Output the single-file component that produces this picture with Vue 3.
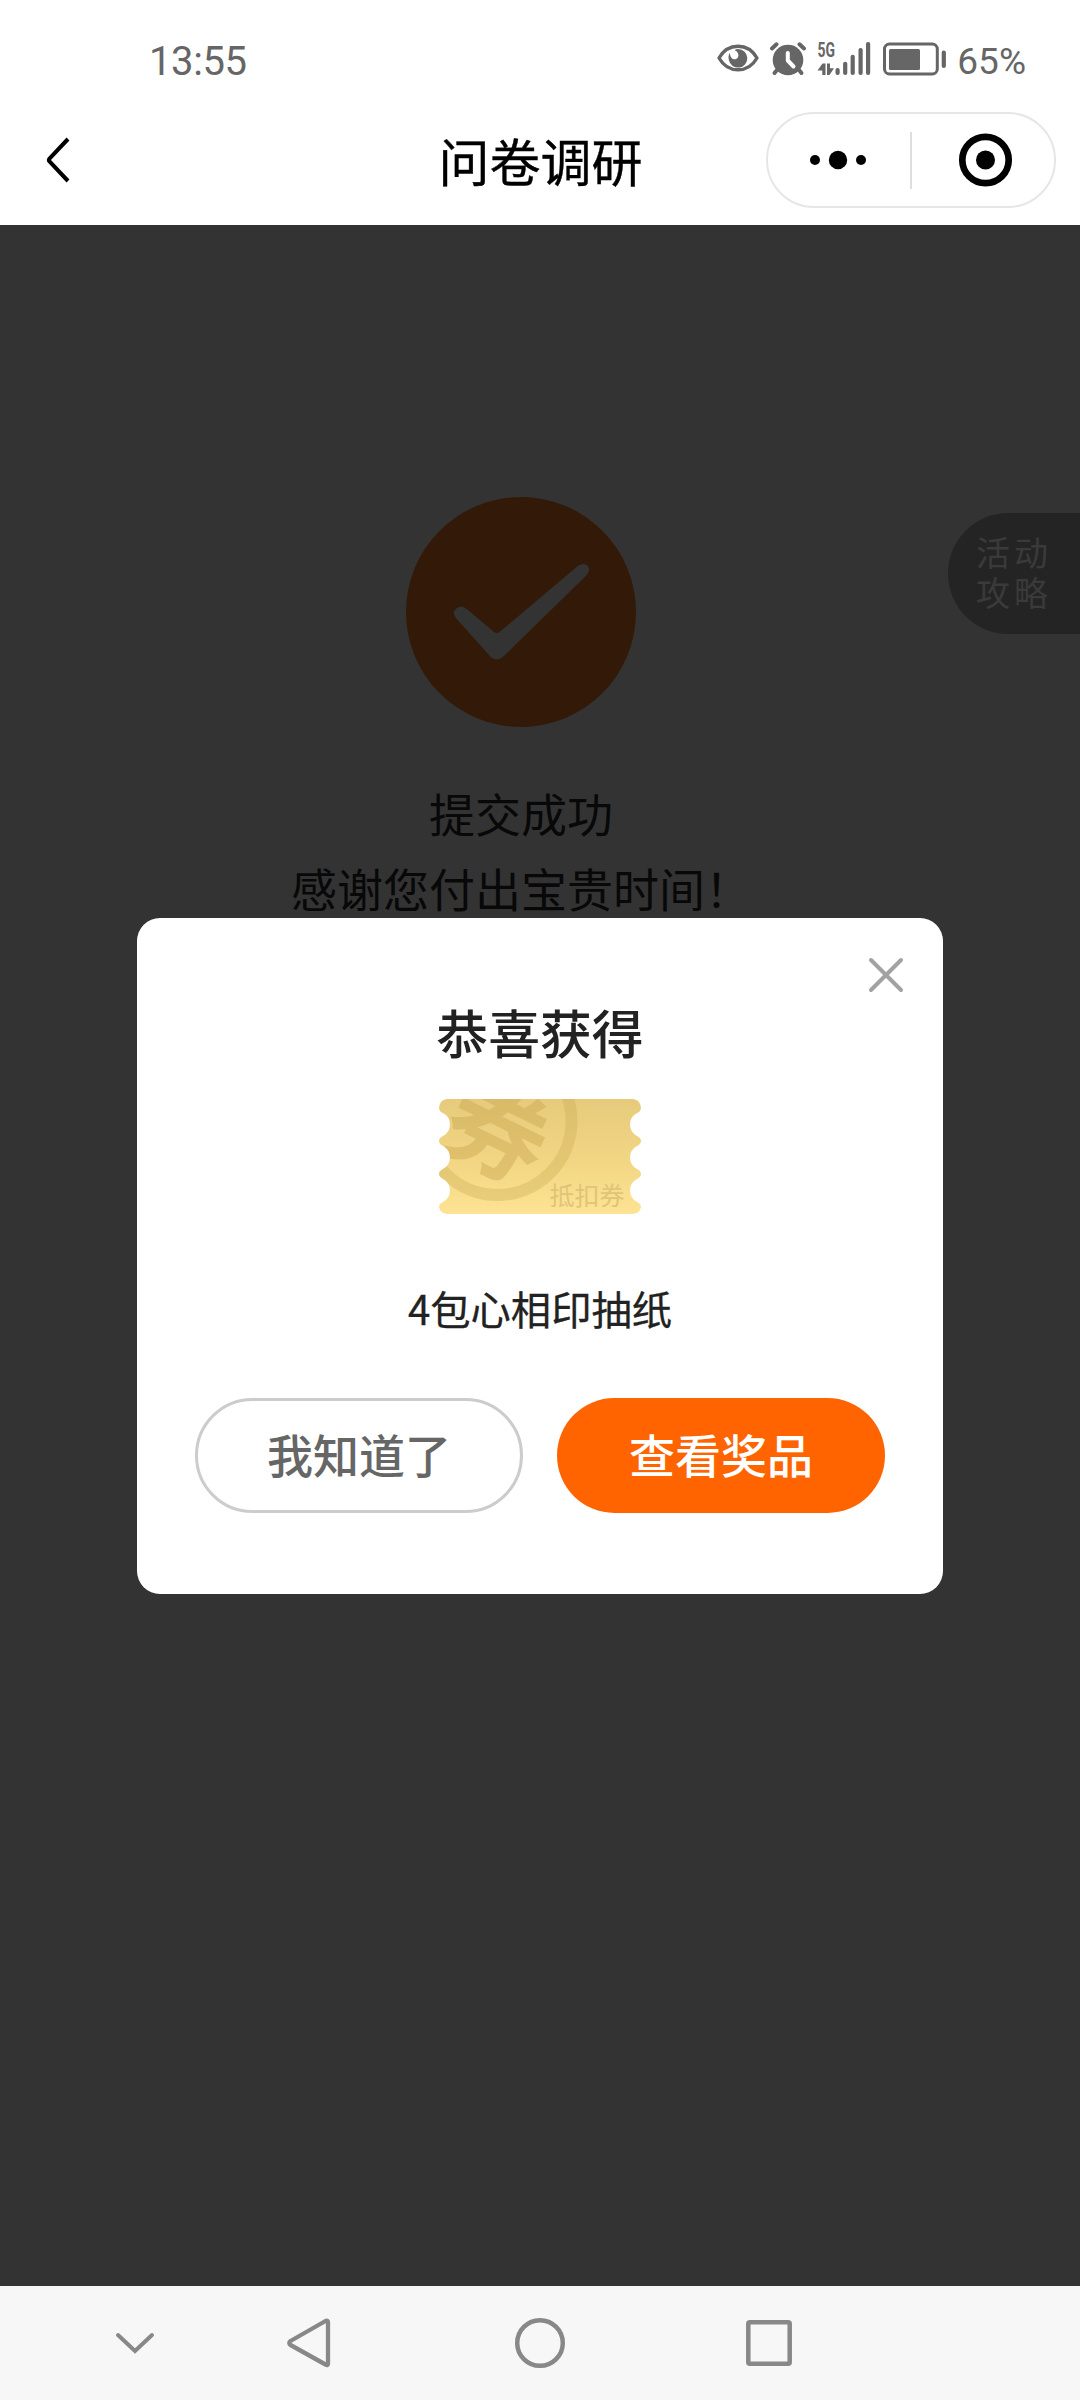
<script setup>
const signalBars = [
  { x: 0, h: 7 },
  { x: 7.6, h: 13.3 },
  { x: 15.1, h: 20.3 },
  { x: 23, h: 27 },
  { x: 30.5, h: 33 },
]
const thanks = ['提交成功', '感谢您付出宝贵时间！']
</script>

<template>
  <div class="screen">
    <header class="top">
      <div class="status">
        <span class="clock">13:55</span>
        <div class="indicators">
          <svg class="eye" width="42" height="28" viewBox="0 0 42 28">
            <path d="M2 14C6 7 13 2.2 21 2.2S36 7 40 14C36 21 29 25.8 21 25.8S6 21 2 14Z" fill="none" stroke="#666" stroke-width="3.4" stroke-linejoin="round" />
            <path d="M21 5a9.300 9.300 0 1 1-9.100 11.200c-.8-3.200-.4-5 .9-7.200c.5 4.500 2.700 6.500 5.200 6.300c3.600-.300 4.600-4.600 2-7.500c-.8-.9-1.500-1.300-2.500-1.600c1-.8 2.200-1.200 3.500-1.200Z" fill="#666" />
          </svg>
          <svg class="alarm" width="36" height="34" viewBox="0 0 36 34">
            <circle cx="18" cy="18" r="15.300" fill="#666" />
            <path d="M2 6.500L6.500 2.300M34 6.500L29.500 2.300" stroke="#666" stroke-width="4" stroke-linecap="round" />
            <path d="M7 28L4.500 31M29 28L31.500 31" stroke="#666" stroke-width="4" stroke-linecap="round" />
            <path d="M17.800 11V18.500L23.500 24.500" fill="none" stroke="#fff" stroke-width="4" stroke-linecap="round" stroke-linejoin="round" />
          </svg>
          <svg class="signal" width="53" height="34" viewBox="0 0 53 34">
            <text x="-0.500" y="15" font-size="20.500" font-weight="700" textLength="17.500" lengthAdjust="spacingAndGlyphs" fill="#666">5G</text>
            <path d="M-0.500 28.500L4.500 21.500H7.500V33H4.300V28.500Z" fill="#666" />
            <path d="M9 21.500H12V26.300H16L11.500 33H9Z" fill="#666" />
            <rect v-for="b in signalBars" :key="b.x" :x="17.500 + b.x" :y="33 - b.h" width="4.200" :height="b.h" rx="2" fill="#666" />
          </svg>
          <svg class="battery" width="64" height="34" viewBox="0 0 64 34">
            <rect x="1.500" y="2" width="52.800" height="30" rx="5" fill="none" stroke="#666" stroke-width="3" />
            <rect x="6" y="7" width="31" height="21" rx="1.500" fill="#666" />
            <rect x="58.700" y="8.500" width="4.200" height="17.500" rx="2" fill="#666" />
          </svg>
          <span class="percent">65%</span>
        </div>
      </div>
      <div class="titlebar">
        <svg class="back" width="32" height="52" viewBox="0 0 32 52">
          <path d="M26 5L7.500 24.500Q6.200 26 7.500 27.500L26 47" fill="none" stroke="#000" stroke-width="4" />
        </svg>
        <h1>问卷调研</h1>
        <div class="capsule">
          <svg width="142" height="56" viewBox="0 0 142 56">
            <circle cx="47" cy="28" r="5" />
            <circle cx="70" cy="28" r="9.200" />
            <circle cx="93" cy="28" r="5" />
          </svg>
          <i></i>
          <svg width="142" height="56" viewBox="0 0 142 56">
            <circle cx="73.500" cy="28" r="23.200" fill="none" stroke="#000" stroke-width="6.700" />
            <circle cx="73.500" cy="28" r="9.500" />
          </svg>
        </div>
      </div>
    </header>

    <main class="content">
      <div class="result">
        <svg class="tick" width="230" height="230" viewBox="0 0 230 230">
          <circle cx="115" cy="115" r="115" fill="#331a08" />
          <path d="M49 121Q45 115 49 112Q54 107 60 112L86 134Q90 138 94 134L171 69Q177 65 181 69Q184 73 180 78L96 160Q90 165 84 160Z" transform="translate(0.800 0)" fill="#333" />
        </svg>
        <p v-for="line in thanks" :key="line">{{ line }}</p>
      </div>

      <div class="guide"><span>活动</span><span>攻略</span></div>

      <section class="dialog">
        <svg class="close" width="36" height="36" viewBox="0 0 36 36">
          <path d="M3 3L33 33M33 3L3 33" stroke="#a2a2a2" stroke-width="4" stroke-linecap="round" />
        </svg>
        <h2>恭喜获得</h2>
        <svg class="coupon" width="202" height="115" viewBox="0 0 202 115">
          <defs>
            <linearGradient id="gold" x1="0" y1="0" x2="0" y2="1">
              <stop offset="0" stop-color="#e6cb7c" />
              <stop offset="0.550" stop-color="#f2d684" />
              <stop offset="1" stop-color="#fde393" />
            </linearGradient>
            <clipPath id="ticket">
              <path d="M8 0H194Q202 1 202 10Q201 13 198 14A13 13 0 0 0 198 37Q202 39 202 42Q202 45 198 47A13 13 0 0 0 198 70Q202 72 202 75Q202 78 198 80A13 13 0 0 0 198 103Q202 105 202 108Q201 114 194 115H8Q1 114 0 108Q0 105 4 103A13 13 0 0 0 4 80Q0 78 0 75Q0 72 4 70A13 13 0 0 0 4 47Q0 45 0 42Q0 39 4 37A13 13 0 0 0 4 14Q1 13 0 10Q0 1 8 0Z" />
            </clipPath>
          </defs>
          <g clip-path="url(#ticket)">
            <rect width="202" height="115" fill="url(#gold)" />
            <circle cx="58.500" cy="22" r="74" fill="none" stroke="#c9a750" stroke-opacity="0.330" stroke-width="12" />
            <text x="0" y="36" font-size="102" font-weight="700" text-anchor="middle" transform="translate(57.500 34) rotate(26)" fill="#c9a750" fill-opacity="0.450">券</text>
            <text x="110.500" y="105.500" font-size="25" fill="#dfc577">抵扣券</text>
          </g>
        </svg>
        <p class="prize">4包心相印抽纸</p>
        <div class="actions">
          <button class="ghost">我知道了</button>
          <button class="primary">查看奖品</button>
        </div>
      </section>
    </main>

    <nav class="navbar">
      <svg width="46" height="56" viewBox="0 0 46 56">
        <path d="M6 20L23 36L40 20" fill="none" stroke="#888" stroke-width="4" stroke-linecap="round" />
      </svg>
      <svg width="56" height="56" viewBox="0 0 56 56">
        <path d="M47 7.500V48.500Q47 51 44.500 49.500L9.500 30Q7 28 9.500 26L44.500 6Q47 5 47 7.500Z" fill="none" stroke="#888" stroke-width="4.300" stroke-linejoin="round" />
      </svg>
      <svg width="56" height="56" viewBox="0 0 56 56">
        <circle cx="28" cy="28" r="22.800" fill="none" stroke="#888" stroke-width="4.500" />
      </svg>
      <svg width="56" height="56" viewBox="0 0 56 56">
        <rect x="7.300" y="7.300" width="41.400" height="41.400" rx="1.500" fill="none" stroke="#888" stroke-width="4.500" />
      </svg>
    </nav>
  </div>
</template>

<style>
body {
  margin: 0;
}
</style>

<style scoped>
.screen {
  width: 1080px;
  height: 2400px;
  display: flex;
  flex-direction: column;
  overflow: hidden;
  font-family: "Noto Sans CJK SC", "Noto Sans", sans-serif;
}
svg {
  display: block;
  flex: none;
}
h1, h2, p {
  margin: 0;
  font-weight: 400;
}
.top {
  height: 225px;
  background: #fff;
  flex: none;
}
.status {
  height: 112px;
  display: flex;
  justify-content: space-between;
  box-sizing: border-box;
  padding: 36px 54px 0 149px;
  color: #666;
  font-family: Roboto, sans-serif;
}
.clock {
  font-size: 40px;
  line-height: 52px;
  letter-spacing: -0.4px;
}
.indicators {
  display: flex;
  align-items: flex-start;
  padding-top: 6px;
}
.eye {
  margin: 2px 11px 0 0;
}
.alarm {
  margin-right: 12px;
}
.signal {
  margin-right: 12px;
  overflow: visible;
}
.battery {
  margin-right: 10px;
}
.percent {
  font-size: 37px;
  line-height: 40px;
}
.titlebar {
  height: 96px;
  display: flex;
  align-items: center;
  padding: 0 24px 0 42px;
}
.titlebar h1 {
  margin-left: 364.5px;
  width: 204px;
  font-size: 51px;
  line-height: 60px;
  color: #000;
  -webkit-text-stroke: 0.4px #000;
  white-space: nowrap;
}
.capsule {
  margin-left: auto;
  box-sizing: border-box;
  width: 290px;
  height: 96px;
  border: 2px solid #e6e6e6;
  border-radius: 48px;
  display: flex;
  align-items: center;
}
.capsule i {
  width: 2px;
  height: 57px;
  background: #dedede;
}
.content {
  position: relative;
  height: 2061px;
  background: #333;
  flex: none;
}
.result {
  display: flex;
  flex-direction: column;
  align-items: center;
  padding: 272px 38px 0 0;
}
.tick {
  margin-bottom: 48px;
}
.result p {
  font-size: 46px;
  line-height: 75px;
  color: #080808;
}
.guide {
  position: absolute;
  right: 0;
  top: 288px;
  box-sizing: border-box;
  width: 132px;
  height: 121px;
  padding: 19px 0 0 28px;
  border-radius: 61px 0 0 61px;
  background: #242424;
  color: #3a3a3a;
  font-size: 34px;
  line-height: 39.5px;
  letter-spacing: 4px;
  white-space: nowrap;
  display: flex;
  flex-direction: column;
}
.dialog {
  position: absolute;
  left: 137px;
  top: 693px;
  width: 806px;
  height: 676px;
  border-radius: 23px;
  background: #fff;
  display: flex;
  flex-direction: column;
  align-items: center;
  color: #222;
}
.close {
  align-self: flex-end;
  margin: 39px 39px 0 0;
}
h2 {
  margin-top: 9px;
  font-size: 51.84px;
  line-height: 60px;
  font-weight: 500;
}
.coupon {
  margin-top: 37px;
}
.prize {
  margin-top: 64px;
  font-size: 40.32px;
  line-height: 60px;
  -webkit-text-stroke: 0.3px #222;
}
.actions {
  margin-top: 60px;
  display: flex;
  gap: 34px;
}
button {
  box-sizing: border-box;
  width: 328px;
  height: 115px;
  border: 0;
  padding: 0 0 5px;
  border-radius: 58px;
  font: 500 46px "Noto Sans CJK SC", sans-serif;
}
.ghost {
  border: 3px solid #ccc;
  background: #fff;
  color: #666;
}
.primary {
  background: #ff6400;
  color: #fff;
}
.navbar {
  height: 114px;
  background: #f7f7f7;
  display: flex;
  align-items: center;
  padding: 0 0 0 112px;
  box-sizing: border-box;
}
.navbar svg:nth-child(2) {
  margin-left: 123px;
}
.navbar svg:nth-child(3) {
  margin-left: 175px;
}
.navbar svg:nth-child(4) {
  margin-left: 173px;
}
</style>
